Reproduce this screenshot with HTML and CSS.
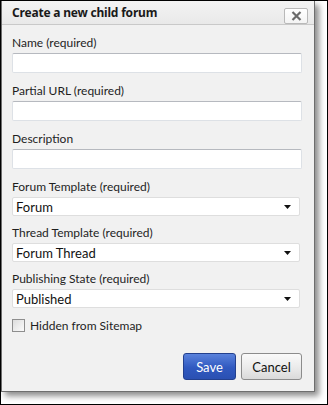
FILE: index.html
```html
<!DOCTYPE html>
<html lang="en">
<head>
	<meta charset="UTF-8">
	<meta name="viewport" content="width=device-width, initial-scale=1.0">
	<title>Create a new child forum</title>
	<link rel="stylesheet" href="styles.css">
</head>
<body>
	<div class="frame">
		<div class="dialog">
			<div class="header">
				<span class="title">Create a new child forum</span>
				<button class="close" type="button">
					<svg width="11" height="10" viewBox="0 0 11 10"><path d="M1.5 1 L9.5 9 M9.5 1 L1.5 9" stroke="#6b6b6b" stroke-width="2.2"/></svg>
				</button>
			</div>
			<form class="content">
				<div class="field">
					<label for="name">Name (required)</label>
					<input type="text" id="name">
				</div>
				<div class="field">
					<label for="url">Partial URL (required)</label>
					<input type="text" id="url">
				</div>
				<div class="field">
					<label for="desc">Description</label>
					<input type="text" id="desc">
				</div>
				<div class="field pick">
					<label for="ftpl">Forum Template (required)</label>
					<div class="select">
						<select id="ftpl"><option>Forum</option></select>
						<svg class="arrow" width="7" height="4" viewBox="0 0 7 4"><path d="M0 0 H7 L3.5 4 Z" fill="#111"/></svg>
					</div>
				</div>
				<div class="field pick">
					<label for="ttpl">Thread Template (required)</label>
					<div class="select">
						<select id="ttpl"><option>Forum Thread</option></select>
						<svg class="arrow" width="7" height="4" viewBox="0 0 7 4"><path d="M0 0 H7 L3.5 4 Z" fill="#111"/></svg>
					</div>
				</div>
				<div class="field pick">
					<label for="state">Publishing State (required)</label>
					<div class="select">
						<select id="state"><option>Published</option></select>
						<svg class="arrow" width="7" height="4" viewBox="0 0 7 4"><path d="M0 0 H7 L3.5 4 Z" fill="#111"/></svg>
					</div>
				</div>
				<div class="check">
					<input type="checkbox" id="hidden">
					<label for="hidden">Hidden from Sitemap</label>
				</div>
				<div class="actions">
					<button type="button" class="btn save">Save</button>
					<button type="button" class="btn cancel">Cancel</button>
				</div>
			</form>
		</div>
	</div>
</body>
</html>
```

FILE: styles.css
```css
body{
	margin: 0;
	background-color: #fff;
	font-family: Lato, "Noto Sans", sans-serif;
	font-size: 12px;
	color: #1e1e1e;
}
.frame{
	width: 328px;
	height: 405px;
	box-sizing: border-box;
	border: 1px solid #000;
	background-color: #fff;
	overflow: hidden;
}
.dialog{
	width: 314px;
	height: 391px;
	box-sizing: border-box;
	border: 1px solid #6e6e6e;
	border-top: none;
	background-color: #f1f1f1;
	box-shadow: 4px 4px 6px rgba(0,0,0,0.45);
}
.header{
	display: flex;
	align-items: center;
	justify-content: space-between;
	height: 23px;
	padding: 0 6px 0 10px;
	background: linear-gradient(#f3f3f3, #e9e9e9);
	border-bottom: 1px solid #c9c9c9;
}
.title{
	font-family: "Noto Sans", sans-serif;
	font-weight: bold;
	font-size: 12px;
	letter-spacing: -0.2px;
	color: #1a1a1a;
}
.close{
	display: flex;
	align-items: center;
	justify-content: center;
	width: 24px;
	height: 16px;
	margin-top: 6px;
	padding: 0;
	background: linear-gradient(#ffffff, #f4f4f4);
	border: 1px solid #b9b9b9;
	border-radius: 2px;
}
.content{
	padding: 10px 12px 0 10px;
	margin: 0;
}
.field{
	display: flex;
	flex-direction: column;
	margin-bottom: 10px;
}
.field label{
	line-height: 16px;
	margin-bottom: 2px;
	font-size: 12px;
}
.field input{
	height: 20px;
	box-sizing: border-box;
	margin: 0;
	border: 1px solid #dde1e6;
	border-top-color: #b6b9bf;
	border-radius: 2px;
	background-color: #fff;
}
.pick{
	margin-bottom: 9px;
}
.select{
	position: relative;
	width: 288px;
}
.select select{
	appearance: none;
	width: 100%;
	height: 19px;
	margin: 0;
	padding: 0 0 0 3px;
	border: 1px solid #dedede;
	border-radius: 2px;
	background-color: #fff;
	font-family: Lato, "Noto Sans", sans-serif;
	font-size: 13px;
	color: #111;
}
.arrow{
	position: absolute;
	right: 9px;
	top: 8px;
}
.check{
	display: flex;
	align-items: center;
	gap: 5px;
	margin-top: 1px;
	height: 16px;
}
.check input{
	appearance: none;
	width: 13px;
	height: 13px;
	margin: 0;
	border: 1px solid #8e8e8e;
	background: linear-gradient(135deg, #dcdcdc, #fbfbfb);
}
.check label{
	font-size: 12px;
}
.actions{
	display: flex;
	justify-content: flex-end;
	gap: 5px;
	margin-top: 20px;
}
.btn{
	height: 27px;
	font-family: Lato, "Noto Sans", sans-serif;
	font-size: 13px;
	border-radius: 3px;
	padding: 0;
}
.save{
	width: 53px;
	color: #fff;
	border: 1px solid #23408e;
	background: linear-gradient(#5a82dc, #3059c0 55%, #2a50b2);
}
.cancel{
	width: 61px;
	color: #111;
	border: 1px solid #8c8c8c;
	background: linear-gradient(#fafafa, #ececec 50%, #dadada);
}
```
